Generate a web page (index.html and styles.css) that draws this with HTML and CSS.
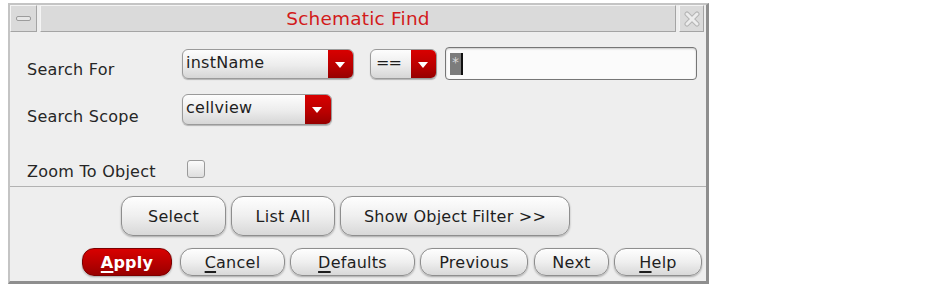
FILE: index.html
```html
<!DOCTYPE html>
<html lang="en">
<head>
    <meta charset="UTF-8">
    <title>Schematic Find</title>
    <link rel="stylesheet" href="styles.css">
</head>
<body>
    <div class="window">
        <div class="titlebar">
            <div class="tb-btn tb-min"><span class="min-bar"></span></div>
            <div class="tb-title">Schematic Find</div>
            <div class="tb-btn tb-close">
                <svg width="16" height="16" viewBox="0 0 16 16">
                    <path d="M3 3 L13 13 M13 3 L3 13" stroke="#b4b4b4" stroke-width="5" stroke-linecap="round" fill="none"/>
                    <path d="M3 3 L13 13 M13 3 L3 13" stroke="#ececec" stroke-width="3" stroke-linecap="round" fill="none"/>
                </svg>
            </div>
        </div>

        <div class="form">
            <div class="row row-search">
                <div class="field-label">Search For</div>
                <div class="combo combo-name"><span class="combo-text">instName</span><span class="combo-arrow"></span></div>
                <div class="combo combo-op"><span class="combo-text">==</span><span class="combo-arrow"></span></div>
                <div class="textfield"><span class="sel">*</span><span class="caret"></span></div>
            </div>
            <div class="row row-scope">
                <div class="field-label">Search Scope</div>
                <div class="combo combo-scope"><span class="combo-text">cellview</span><span class="combo-arrow"></span></div>
            </div>
            <div class="row row-zoom">
                <div class="field-label">Zoom To Object</div>
                <span class="checkbox"></span>
            </div>
        </div>

        <div class="actions">
            <div class="btn-row btn-row-top">
                <button class="btn btn-select">Select</button>
                <button class="btn btn-list">List All</button>
                <button class="btn btn-filter">Show Object Filter &gt;&gt;</button>
            </div>
            <div class="btn-row btn-row-bottom">
                <button class="btn btn-apply"><u>A</u>pply</button>
                <button class="btn btn-cancel"><u>C</u>ancel</button>
                <button class="btn btn-defaults"><u>D</u>efaults</button>
                <button class="btn btn-previous">Previous</button>
                <button class="btn btn-next">Next</button>
                <button class="btn btn-help"><u>H</u>elp</button>
            </div>
        </div>
    </div>
</body>
</html>
```

FILE: styles.css
```css
* {
    box-sizing: border-box;
}
body {
    margin: 0;
    padding: 3px 0 0 8px;
    background: #ffffff;
    font-family: "DejaVu Sans", sans-serif;
    font-size: 16px;
    letter-spacing: 0.25px;
    color: #222;
}
.window {
    width: 701px;
    background: #eeeeee;
    border-left: 2px solid #c4c4c4;
    border-top: 2px solid #c4c4c4;
    border-right: 3px solid #8e8e8e;
    border-bottom: 3px solid #8e8e8e;
}

/* title bar */
.titlebar {
    display: flex;
    gap: 3px;
    height: 28px;
    padding: 0 2px 1px 0;
}
.tb-btn,
.tb-title {
    background: #dadada;
    border-top: 1px solid #f4f4f4;
    border-left: 1px solid #f4f4f4;
    border-right: 1px solid #a4a4a4;
    border-bottom: 1px solid #a4a4a4;
}
.tb-min {
    width: 27px;
    display: flex;
    align-items: center;
    justify-content: center;
}
.min-bar {
    width: 15px;
    height: 5px;
    background: #e6e6e6;
    border: 1px solid #9c9c9c;
    border-radius: 2px;
}
.tb-title {
    flex: 1;
    text-align: center;
    color: #d21a1a;
    font-size: 18.5px;
    letter-spacing: 0.2px;
    line-height: 25px;
}
.tb-close {
    width: 25px;
    display: flex;
    align-items: center;
    justify-content: center;
}

/* form */
.form {
    padding: 14px 9px 5px 17px;
    border-bottom: 1px solid #b2b2b2;
}
.row {
    display: flex;
    align-items: center;
}
.field-label {
    width: 155px;
    align-self: flex-start;
    margin-top: 13px;
    line-height: 19px;
    color: #262626;
}
.row-search {
    height: 33px;
}
.row-scope {
    height: 31px;
    margin-top: 14px;
}
.row-zoom {
    height: 21px;
    margin-top: 35px;
    align-items: flex-start;
}
.row-zoom .field-label {
    margin-top: 2px;
}

.combo {
    display: flex;
    height: 30px;
    border: 1px solid #9a9a9a;
    border-radius: 6px;
    background: linear-gradient(#fdfdfd, #ececec 55%, #d6d6d6);
    box-shadow: 0 1px 1px rgba(0, 0, 0, 0.25);
    overflow: hidden;
}
.combo-text {
    flex: 1;
    padding: 3px 0 0 3px;
    line-height: 20px;
    color: #1e1e1e;
}
.combo-arrow {
    position: relative;
    width: 25px;
    background: linear-gradient(#d80000, #b80000 60%, #960000);
}
.combo-arrow::after {
    content: "";
    position: absolute;
    left: 7px;
    top: 12px;
    border-left: 5px solid transparent;
    border-right: 5px solid transparent;
    border-top: 6px solid #ffffff;
}
.combo-name {
    width: 172px;
}
.combo-op {
    width: 67px;
    margin-left: 16px;
}
.combo-op .combo-text {
    padding-left: 5px;
    letter-spacing: -1px;
}
.combo-scope {
    width: 150px;
    height: 31px;
}
.combo-scope .combo-arrow {
    width: 26px;
}

.textfield {
    display: flex;
    align-items: center;
    width: 252px;
    height: 33px;
    margin-left: 8px;
    padding-left: 4px;
    border: 1px solid #767676;
    border-radius: 4px;
    background: #fbfbfb;
    box-shadow: inset 0 1px 2px rgba(0, 0, 0, 0.2);
}
.sel {
    width: 11px;
    height: 22px;
    background: #7c7c7c;
    color: #d8d8d8;
    font-size: 14px;
    line-height: 18px;
    text-align: center;
}
.caret {
    width: 2px;
    height: 22px;
    background: #111;
}

.checkbox {
    width: 18px;
    height: 18px;
    margin-left: 5px;
    border: 1px solid #9a9a9a;
    border-radius: 3px;
    background: linear-gradient(#fbfbfb, #dedede);
}

/* buttons */
.actions {
    padding: 9px 0 5px 0;
}
.btn-row {
    display: flex;
    gap: 5px;
}
.btn-row-top {
    padding-left: 111px;
}
.btn-row-bottom {
    padding-left: 72px;
    margin-top: 12px;
}
.btn {
    font-family: "DejaVu Sans", sans-serif;
    font-size: 16px;
    letter-spacing: 0.25px;
    color: #1e1e1e;
    padding: 0;
    border: 1px solid #8e8e8e;
    border-radius: 12px;
    background: linear-gradient(#fefefe, #efefef 50%, #d8d8d8);
    box-shadow: 0 1px 2px rgba(0, 0, 0, 0.3);
}
.btn u {
    text-underline-offset: 3px;
    text-decoration-thickness: 2px;
}
.btn-row-top .btn {
    height: 40px;
}
.btn-row-bottom .btn {
    height: 28px;
}
.btn-select { width: 105px; }
.btn-list { width: 104px; }
.btn-filter { width: 230px; }
.btn-apply {
    width: 90px;
    margin-right: 3px;
    color: #ffffff;
    font-weight: bold;
    border-color: #7c0000;
    background: linear-gradient(#d80000, #b70000 55%, #980000);
}
.btn-cancel { width: 105px; }
.btn-defaults { width: 125px; }
.btn-previous { width: 108px; }
.btn-next { width: 75px; margin-left: 1px; }
.btn-help { width: 88px; }
```
